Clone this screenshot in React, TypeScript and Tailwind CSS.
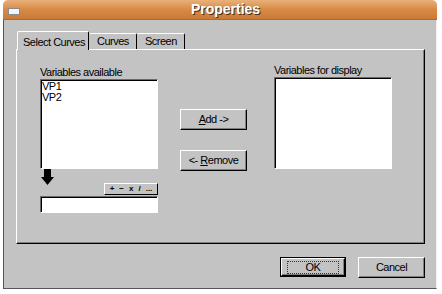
import React from "react";

const raised =
  "border border-t-white border-l-white border-r-black border-b-black shadow-[inset_-1px_-1px_0_#808080]";
const sunken =
  "bg-white border border-t-[#6a6a6a] border-l-[#6a6a6a] border-r-white border-b-white shadow-[inset_1px_1px_0_#000]";

const Btn = ({ children, def }: { children: React.ReactNode; def?: boolean }) => (
  <div
    className={
      def
        ? "w-[66px] h-[20px] border border-black p-0"
        : "w-[67px] h-[21px]"
    }
  >
    <div className={`w-full h-full flex items-center justify-center bg-[#c3c3c3] ${raised}`}>
      <span className={def ? "border border-dotted border-[#333] px-[18px] leading-[11px]" : ""}>
        {children}
      </span>
    </div>
  </div>
);

export default function App() {
  return (
    <div
      className="w-[442px] h-[294px] bg-white text-[11px] tracking-[-0.5px] text-black"
      style={{ fontFamily: '"Liberation Sans", Arial, sans-serif' }}
    >
      <div className="ml-[3px] w-[434px] h-[289px] flex flex-col">
        {/* title bar */}
        <div className="h-[20px] rounded-t-[5px] bg-gradient-to-b from-[#eab07a] via-[#d88a45] to-[#c97a36] flex items-start border-b border-[#b06a30]">
          <div className="ml-[5px] mt-[8px] w-[12px] h-[7px] bg-[#f4f4f4] border border-[#8a8a8a]" />
          <div className="flex-1 text-center font-bold text-[14px] leading-[19px] tracking-normal text-white [text-shadow:1px_1px_0_#4a2e18] pr-[6px]">
            Properties
          </div>
        </div>

        {/* body */}
        <div className="flex-1 bg-[#c3c3c3] border-l border-l-[#555] border-r border-r-[#eee] border-b border-b-[#555] pl-[12px] pr-[10px] pt-[11px] flex flex-col">
          {/* tabs */}
          <div className="flex items-end h-[18px] pl-[1px] relative z-10">
            <div className="h-[19px] w-[72px] bg-[#c3c3c3] border-t border-l border-white border-r border-r-black rounded-t-[2px] pt-[2px] pl-[5px] -mb-[1px]">
              Select Curves
            </div>
            <div className="h-[16px] w-[48px] border-t border-white border-r border-r-black rounded-t-[2px] pl-[8px] flex items-center">
              Curves
            </div>
            <div className="h-[16px] w-[48px] border-t border-white border-r border-r-black rounded-t-[2px] pl-[8px] flex items-center">
              Screen
            </div>
          </div>

          {/* panel */}
          <div className="w-[409px] h-[195px] border-t border-l border-white border-r border-r-black border-b border-b-black shadow-[inset_-1px_-1px_0_#808080] flex pl-[23px] pt-[15px]">
            {/* left column */}
            <div className="w-[118px] flex flex-col">
              <div className="h-[14px] leading-[14px]">Variables available</div>
              <div className={`h-[90px] ${sunken} pl-[1px] leading-[11px] pt-[1px]`}>
                <div>VP1</div>
                <div>VP2</div>
              </div>
              <div className="h-[27px] flex justify-between">
                <svg width="13" height="16" viewBox="0 0 13 16" className="ml-[1px]">
                  <path d="M3 0h7v8h3l-6.5 8L0 8h3z" fill="#000" />
                </svg>
                <div className="self-end mb-[1px] h-[12px] w-[54px] bg-[#c3c3c3] border border-t-white border-l-white border-r-black border-b-black flex items-center justify-center gap-[5px] text-[8px] font-bold tracking-normal leading-none">
                  <span>+</span>
                  <span>−</span>
                  <span>x</span>
                  <span>/</span>
                  <span>...</span>
                </div>
              </div>
              <div className={`h-[17px] ${sunken}`} />
            </div>

            {/* middle column */}
            <div className="ml-[22px] w-[67px] flex flex-col pt-[44px] gap-[20px]">
              <Btn>
                <span className="underline">A</span>dd -&gt;
              </Btn>
              <Btn>
                &lt;- <span className="underline">R</span>emove
              </Btn>
            </div>

            {/* right column */}
            <div className="ml-[27px] w-[118px] flex flex-col">
              <div className="h-[13px] leading-[13px] -mt-[1px]">Variables for display</div>
              <div className={`h-[92px] ${sunken}`} />
            </div>
          </div>

          {/* dialog buttons */}
          <div className="flex justify-end gap-[12px] mt-[13px] pr-[1px]">
            <Btn def>OK</Btn>
            <Btn>Cancel</Btn>
          </div>
        </div>
      </div>
    </div>
  );
}
